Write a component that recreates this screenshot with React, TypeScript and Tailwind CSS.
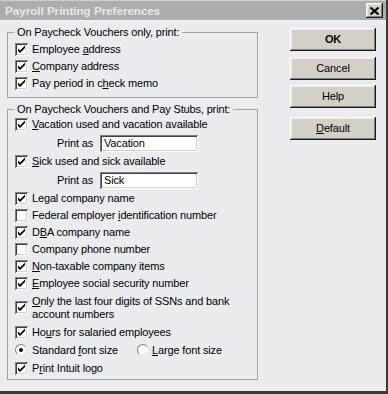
import React from "react";

const sunken =
  "shadow-[inset_1px_1px_#808080,inset_-1px_-1px_#ffffff,inset_2px_2px_#404040,inset_-2px_-2px_#d4d0c8]";
const raised =
  "shadow-[inset_-1px_-1px_#1a1a1a,inset_1px_1px_#ffffff,inset_-2px_-2px_#808080,inset_2px_2px_#ece9e2]";

function Check({ on }: { on: boolean }) {
  return (
    <div className={`w-[13px] h-[13px] shrink-0 bg-white ${sunken} flex items-center justify-center`}>
      {on && (
        <svg width="13" height="13" viewBox="0 0 13 13">
          <path d="M3 5.5 L5 7.5 L10 2.5 L10 5 L5 10 L3 8 Z" fill="#000" />
        </svg>
      )}
    </div>
  );
}

function Radio({ on }: { on: boolean }) {
  return (
    <div className="w-[12px] h-[12px] shrink-0 rounded-full bg-white border border-[#808080] border-r-[#e0e0e0] border-b-[#e0e0e0] flex items-center justify-center">
      {on && <div className="w-[4px] h-[4px] rounded-full bg-black" />}
    </div>
  );
}

function Row({
  on,
  children,
  h = "h-[17px]",
}: {
  on: boolean;
  children: React.ReactNode;
  h?: string;
}) {
  return (
    <div className={`flex items-center gap-[4px] pl-[7px] ${h}`}>
      <Check on={on} />
      <div className="leading-[13px]">{children}</div>
    </div>
  );
}

function PrintAs({ value, h }: { value: string; h: string }) {
  return (
    <div className={`flex items-center pl-[49px] ${h}`}>
      <span className="w-[43px]">Print as</span>
      <div className={`w-[98px] h-[17px] bg-white ${sunken} flex items-center pl-[4px]`}>{value}</div>
    </div>
  );
}

function Btn({ children, bold, cls = "" }: { children: React.ReactNode; bold?: boolean; cls?: string }) {
  return (
    <div
      className={`w-[86px] h-[23px] bg-[#d4d0c8] ${raised} flex items-center justify-center ${bold ? "font-bold" : ""} ${cls}`}
    >
      {children}
    </div>
  );
}

function Group({ title, children, cls }: { title: string; children: React.ReactNode; cls: string }) {
  return (
    <div className={`relative border border-[#a3a3a3] ${cls}`}>
      <span className="absolute -top-[8px] left-[6px] px-[3px] bg-[#eaecf0] leading-[14px]">{title}</span>
      {children}
    </div>
  );
}

export default function App() {
  return (
    <div className="w-[388px] h-[394px] bg-[#eaecf0] border-r-2 border-b-[3px] border-r-[#3a3a3a] border-b-[#3a3a3a] flex flex-col text-[11px] tracking-[-0.15px] text-black font-['Liberation_Sans',Arial,sans-serif] overflow-hidden">
      <div className="h-[20px] shrink-0 bg-[#adadad] border-t border-t-[#cfcfcf] flex items-center pl-[5px] pr-[3px]">
        <span className="font-bold text-[11.6px] tracking-normal text-[#e8e8e8]">Payroll Printing Preferences</span>
        <div className={`ml-auto w-[17px] h-[15px] bg-[#d4d0c8] ${raised} flex items-center justify-center`}>
          <svg width="9" height="8" viewBox="0 0 9 8">
            <path d="M0.5 0.5 L8.5 7.5 M8.5 0.5 L0.5 7.5" stroke="#000" strokeWidth="2" />
          </svg>
        </div>
      </div>
      <div className="flex pl-[7px] border-t border-t-[#f4f4f4]">
        <div className="w-[251px] flex flex-col pt-[11px]">
          <Group title="On Paycheck Vouchers only, print:" cls="pt-[8px] pb-[5px]">
            <Row on>
              Employee <u>a</u>ddress
            </Row>
            <Row on>
              <u>C</u>ompany address
            </Row>
            <Row on>
              Pay period in c<u>h</u>eck memo
            </Row>
          </Group>
          <Group title="On Paycheck Vouchers and Pay Stubs, print:" cls="mt-[11px] pt-[6px] pb-[2px]">
            <Row on>
              <u>V</u>acation used and vacation available
            </Row>
            <PrintAs value="Vacation" h="h-[20px]" />
            <Row on>
              <u>S</u>ick used and sick available
            </Row>
            <PrintAs value="Sick" h="h-[20px]" />
            <Row on>
              Le<u>g</u>al company name
            </Row>
            <Row on={false}>
              Federal employer <u>i</u>dentification number
            </Row>
            <Row on>
              D<u>B</u>A company name
            </Row>
            <Row on={false}>Company phone number</Row>
            <Row on>
              <u>N</u>on-taxable company items
            </Row>
            <Row on>
              <u>E</u>mployee social security number
            </Row>
            <Row on h="h-[31px]">
              <u>O</u>nly the last four digits of SSNs and bank
              <br />
              account numbers
            </Row>
            <Row on h="h-[18px]">
              Ho<u>u</u>rs for salaried employees
            </Row>
            <div className="flex items-center h-[18px] pl-[7px]">
              <div className="w-[122px] flex items-center gap-[5px]">
                <Radio on />
                <span>
                  Standard <u>f</u>ont size
                </span>
              </div>
              <div className="flex items-center gap-[3px]">
                <Radio on={false} />
                <span>
                  <u>L</u>arge font size
                </span>
              </div>
            </div>
            <Row on h="h-[18px]">
              P<u>r</u>int Intuit logo
            </Row>
          </Group>
        </div>
        <div className="ml-[32px] flex flex-col pt-[7px]">
          <Btn bold>OK</Btn>
          <Btn cls="mt-[6px]">Cancel</Btn>
          <Btn cls="mt-[5px]">Help</Btn>
          <Btn cls="mt-[9px]">
            <span>
              <u>D</u>efault
            </span>
          </Btn>
        </div>
      </div>
    </div>
  );
}
